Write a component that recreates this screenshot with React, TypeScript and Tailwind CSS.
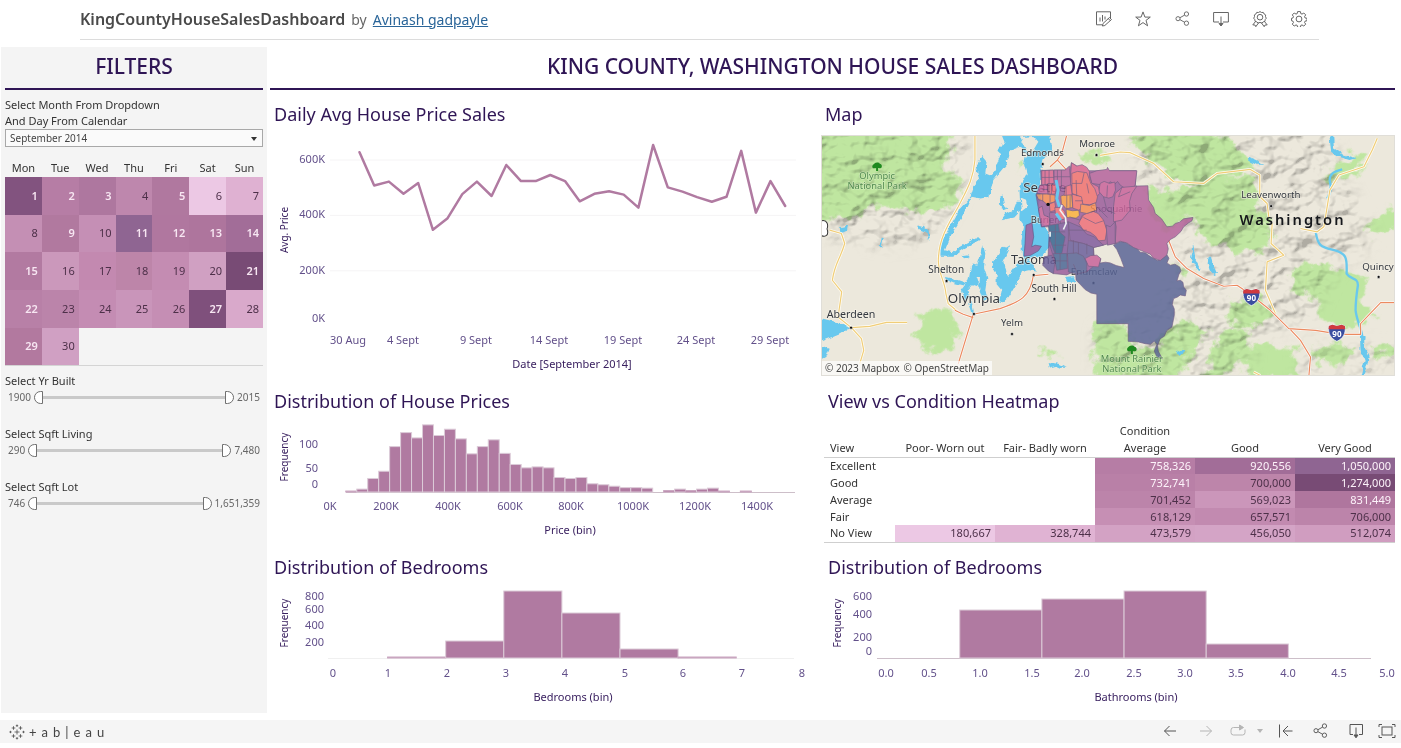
import type { ReactNode } from 'react';

const SANS = "font-['Noto_Sans','Open_Sans',sans-serif]";

/* ---------- icons ---------- */

function Icon({ children, className = 'size-4' }: { children: ReactNode; className?: string }) {
  return (
    <svg viewBox="0 0 16 16" className={className} fill="none" stroke="currentColor" strokeWidth="1" aria-hidden="true">
      {children}
    </svg>
  );
}

const EditIcon = () => (
  <Icon>
    <path d="M14.5 7V.8H.5v13h5.700" />
    <path d="M4 6.5v4M6.500 4v6.500M9 5.500v3" />
    <path d="M7 12.500l6.500-6 2 2-6.700 6L6.400 15z" />
    <path d="M12.300 7.600l2 2.100" />
  </Icon>
);
const StarIcon = () => (
  <Icon>
    <path d="M8 .9l1.900 5.200h5.400l-4.300 3.300 1.600 5.400L8 11.600l-4.600 3.200L5 9.400.7 6.100h5.400z" />
  </Icon>
);
const ShareIcon = () => (
  <Icon className="size-[15px]">
    <circle cx="3.2" cy="8.2" r="2.2" />
    <circle cx="12.2" cy="3.2" r="2.3" />
    <circle cx="12.2" cy="13" r="2.3" />
    <path d="M5.2 7.2l5-2.8M5.2 9.2l5 2.8" />
  </Icon>
);
const DownloadIcon = () => (
  <Icon>
    <path d="M6 11H.6V1.5h14.8V11H10" />
    <path d="M8 5.5v9" />
    <path d="M6 12.4h4L8 15z" fill="currentColor" />
  </Icon>
);
const RibbonIcon = () => (
  <Icon>
    <circle cx="8" cy="6.2" r="2.8" />
    <path d="M8 .6l1.5.9 1.8-.1.8 1.6 1.5.9-.1 1.8.8 1.5-1.1 1.4-.3 1.8-1.7.5-1.3 1.2L8 11.4l-1.9.7-1.3-1.2-1.7-.5-.3-1.8-1.1-1.4.8-1.5-.1-1.8 1.5-.9.8-1.6 1.8.1z" />
    <path d="M3.6 10.4L.8 13.9l2.2.1.8 1.7 2.9-4M12.4 10.4l2.8 3.5-2.2.1-.8 1.7-2.9-4" />
  </Icon>
);
const GearIcon = () => (
  <Icon>
    <circle cx="8" cy="8" r="2.9" />
    <path d="M6.6.6h2.8l.4 2 1.2.5 1.8-1.1 1.900 1.900-1.200 1.800.5 1.200 2 .4v2.400l-2 .5-.5 1.200 1.200 1.700-1.900 2-1.800-1.200-1.200.5-.4 2H6.600l-.4-2-1.200-.5-1.800 1.200-1.900-2 1.200-1.700-.5-1.200-1.500-.5V7.300l1.500-.4.5-1.200L1.300 3.900 3.200 2 5 3.100l1.200-.5z" />
  </Icon>
);

const BackIcon = () => (
  <Icon>
    <path d="M14 8H2.500M7.500 3L2.500 8l5 5" />
  </Icon>
);
const ForwardIcon = () => (
  <Icon>
    <path d="M2 8h11.500M8.500 3l5 5-5 5" />
  </Icon>
);
const ReplayIcon = () => (
  <Icon>
    <path d="M10 4.500H3.500a2.500 2.500 0 00-2.500 2.500v2.500A2.500 2.500 0 003.500 12h9A2.500 2.500 0 0015 9.500V6.500" />
    <path d="M9.500 2l4 2.500-4 2.500z" fill="currentColor" />
  </Icon>
);
const ResetIcon = () => (
  <Icon>
    <path d="M1.500 1.500v13M14.500 8H5M10 3L5 8l5 5" />
  </Icon>
);
const FooterDownloadIcon = () => (
  <Icon>
    <path d="M5 11.500H2V1.500h12.500v10H11" />
    <path d="M8 4.500v8" />
    <path d="M6 12h4l-2 2.800z" fill="currentColor" />
  </Icon>
);
const FullscreenIcon = () => (
  <Icon className="h-4 w-[18px]">
    <rect x="3" y="4" width="10" height="8" />
    <path d="M0 4V1.500h3M13 1.500h3V4M16 12v2.500h-3M3 14.500H0V12" />
  </Icon>
);
const TableauMark = () => (
  <Icon className="size-4">
    <path
      strokeOpacity="0.75"
      d="M8 5.500v5M5.500 8h5M4.500 2.200v3.600M2.700 4h3.600M11.500 2.200v3.600M9.700 4h3.600M4.500 10.200v3.600M2.700 12h3.600M11.500 10.200v3.600M9.700 12h3.600M8 .5v2.400M6.800 1.700h2.400M8 13.100v2.400M6.800 14.300h2.400M1.500 6.800v2.400M.3 8h2.400M14.500 6.800v2.400M13.300 8h2.400"
    />
  </Icon>
);

/* ---------- filters ---------- */

type Day = [day: number, fill: string, strong?: boolean];

const WEEKDAYS = ['Mon', 'Tue', 'Wed', 'Thu', 'Fri', 'Sat', 'Sun'];
const WEEKS: Day[][] = [
  [[1, 'bg-[#82537f]', true], [2, 'bg-[#b67da5]', true], [3, 'bg-[#ae779f]', true], [4, 'bg-[#be87ad]'], [5, 'bg-[#b0789f]', true], [6, 'bg-[#ecc8e4]'], [7, 'bg-[#dfb1d2]']],
  [[8, 'bg-[#c48fb4]'], [9, 'bg-[#b1799f]', true], [10, 'bg-[#c58fb5]'], [11, 'bg-[#8f6592]', true], [12, 'bg-[#b0779f]', true], [13, 'bg-[#ae759d]', true], [14, 'bg-[#a26d98]', true]],
  [[15, 'bg-[#b27aa1]', true], [16, 'bg-[#cb98bb]'], [17, 'bg-[#c389b0]'], [18, 'bg-[#bd85a9]'], [19, 'bg-[#c48cb2]'], [20, 'bg-[#d0a0c2]'], [21, 'bg-[#784b75]', true]],
  [[22, 'bg-[#b880a7]', true], [23, 'bg-[#bb84aa]'], [24, 'bg-[#c48cb3]'], [25, 'bg-[#c995ba]'], [26, 'bg-[#c58eb4]'], [27, 'bg-[#7f507c]', true], [28, 'bg-[#d9a9cb]']],
  [[29, 'bg-[#b2799f]', true], [30, 'bg-[#d0a0c3]']],
];

function Calendar() {
  return (
    <table className="mt-3 h-[207px] w-full table-fixed border-collapse border-b border-[#d4d4d4] text-[11px] text-[#333]">
      <thead>
        <tr className="h-[18px]">
          {WEEKDAYS.map((d) => (
            <th key={d} scope="col" className="p-0 text-center leading-4 font-normal">{d}</th>
          ))}
        </tr>
      </thead>
      <tbody>
        {WEEKS.map((week, i) => (
          <tr key={i} className="h-[37px]">
            {week.map(([day, fill, strong]) => (
              <td key={day} className={`${fill} p-0 pr-1 text-right ${strong ? 'font-semibold text-[#f7e6f2]' : 'text-[#4d3049]'}`}>
                {day}
              </td>
            ))}
          </tr>
        ))}
      </tbody>
    </table>
  );
}

const THUMB =
  'pointer-events-none absolute inset-0 m-0 h-[13px] w-full appearance-none bg-transparent [&::-webkit-slider-thumb]:pointer-events-auto [&::-webkit-slider-thumb]:h-[13px] [&::-webkit-slider-thumb]:w-[9px] [&::-webkit-slider-thumb]:appearance-none [&::-webkit-slider-thumb]:border [&::-webkit-slider-thumb]:border-[#707070] [&::-webkit-slider-thumb]:bg-white';

function RangeFilter({ label, min, max }: { label: string; min: number; max: number }) {
  const show = (n: number) => (n > 2100 ? n.toLocaleString('en-US') : String(n));
  return (
    <fieldset className="h-[53px]">
      <legend className="text-[11px] leading-4 text-[#333]">{label}</legend>
      <div className="flex items-center gap-[3px] px-[3px] text-[10px] leading-4 text-[#666]">
        <span>{show(min)}</span>
        <div className="relative h-[13px] flex-1">
          <div className="h-[3px] translate-y-[5px] bg-[#c9c9c9]" />
          <input type="range" aria-label={`${label} minimum`} min={min} max={max} defaultValue={min} className={`${THUMB} [&::-webkit-slider-thumb]:rounded-l-full`} />
          <input type="range" aria-label={`${label} maximum`} min={min} max={max} defaultValue={max} className={`${THUMB} [&::-webkit-slider-thumb]:rounded-r-full`} />
        </div>
        <span>{show(max)}</span>
      </div>
    </fieldset>
  );
}

function Filters() {
  return (
    <aside className="w-[266px] shrink-0 bg-[#f4f4f4] px-1">
      <h2 className="border-b-2 border-[#2f1555] pt-[3px] pb-[5px] text-center text-[21px] leading-[33px] font-medium text-[#2f1555]">FILTERS</h2>
      <label htmlFor="month" className="mt-[7px] block text-[11px] leading-4 text-[#333]">
        Select Month From Dropdown
        <br />
        And Day From Calendar
      </label>
      <div className="relative">
        <select id="month" className="block h-[18px] w-full appearance-none border border-[#a8a8a8] bg-[#fafafa] px-1 text-[10px] text-[#444]">
          <option>September 2014</option>
        </select>
        <svg viewBox="0 0 6 4" className="pointer-events-none absolute top-2 right-1.5 h-1 w-1.5" aria-hidden="true">
          <path d="M0 0h6L3 4z" fill="#333" />
        </svg>
      </div>
      <Calendar />
      <div className="mt-[7px]">
        <RangeFilter label="Select Yr Built" min={1900} max={2015} />
        <RangeFilter label="Select Sqft Living" min={290} max={7480} />
        <RangeFilter label="Select Sqft Lot" min={746} max={1651359} />
      </div>
    </aside>
  );
}

/* ---------- charts ---------- */

const INK = '#3a2160';
const TICK = '#62508a';
const BAR = '#b07aa1';

function Tick({ x, y, end, children }: { x: number; y: number; end?: boolean; children: ReactNode }) {
  return (
    <text x={x} y={y + 4} fontSize="11" fill={TICK} textAnchor={end ? 'end' : 'middle'}>
      {children}
    </text>
  );
}

function AxisTitles({ left, leftY, bottom, bottomX, bottomY, x = 15 }: { left: string; leftY: number; bottom: string; bottomX: number; bottomY: number; x?: number }) {
  return (
    <g fontSize="11" fill={INK} textAnchor="middle">
      <text transform={`translate(${x + 3} ${leftY}) rotate(-90)`} fontSize="10">{left}</text>
      <text x={bottomX} y={bottomY + 4}>{bottom}</text>
    </g>
  );
}

const PRICES = [628, 508, 522, 478, 517, 348, 390, 477, 522, 470, 582, 524, 524, 546, 524, 451, 478, 487, 475, 428, 654, 501, 486, 466, 449, 467, 633, 410, 524, 434];

function DailyPriceChart() {
  const y = (k: number) => 29 + (600 - k) * 0.277;
  const points = PRICES.map((p, i) => `${(89.5 + i * 14.68).toFixed(1)},${y(p).toFixed(1)}`).join(' ');
  const dates: [number, string][] = [[78, '30 Aug'], [133, '4 Sept'], [206, '9 Sept'], [279, '14 Sept'], [353, '19 Sept'], [426, '24 Sept'], [500, '29 Sept']];
  return (
    <svg viewBox="0 0 551 254" className="block w-full" role="img" aria-label="Average house price per day">
      {[600, 400, 200].map((k) => (
        <g key={k}>
          <line x1="60" x2="526" y1={y(k)} y2={y(k)} stroke="#f5f4f5" />
          <Tick x={55} y={y(k) - 1} end>{k}K</Tick>
        </g>
      ))}
      <Tick x={55} y={187} end>0K</Tick>
      <polyline points={points} fill="none" stroke={BAR} strokeWidth="2.500" strokeLinejoin="round" strokeLinecap="round" />
      {dates.map(([x, d]) => <Tick key={d} x={x} y={209}>{d}</Tick>)}
      <AxisTitles left="Avg. Price" leftY={99} bottom="Date [September 2014]" bottomX={302} bottomY={233} />
    </svg>
  );
}

interface HistogramProps {
  width: number;
  height: number;
  label: string;
  start: number;
  binWidth: number;
  heights: number[];
  axis: [number, number];
  axisColor: string;
  yTicks: [number, string][];
  yTickX: number;
  xTicks: [number, string][];
  xTickY?: number;
  bottom: string;
  bottomX: number;
  leftX?: number;
}

function Histogram(p: HistogramProps) {
  const base = 74;
  const tickY = p.xTickY ?? 89;
  return (
    <svg viewBox={`0 0 ${p.width} ${p.height}`} className="block w-full" role="img" aria-label={p.label}>
      <line x1={p.axis[0]} x2={p.axis[1]} y1={base + 0.5} y2={base + 0.5} stroke={p.axisColor} />
      {p.heights.map((h, i) =>
        h > 0 ? (
          <rect key={i} x={p.start + i * p.binWidth} y={base - h} width={p.binWidth} height={h} fill={BAR} stroke={h < 2 ? '#c9a6c0' : '#dccbd8'} />
        ) : null,
      )}
      {p.yTicks.map(([y, t]) => <Tick key={t} x={p.yTickX} y={y} end>{t}</Tick>)}
      {p.xTicks.map(([x, t]) => <Tick key={t} x={x} y={tickY}>{t}</Tick>)}
      <AxisTitles left="Frequency" leftY={39} bottom={p.bottom} bottomX={p.bottomX} bottomY={tickY + 24} x={p.leftX} />
    </svg>
  );
}

const PRICE_COUNTS = [2, 6, 28, 43, 94, 123, 112, 139, 117, 130, 110, 79, 94, 108, 80, 57, 50, 52, 50, 30, 28, 30, 17, 15, 12, 9, 9, 8, 0, 3, 6, 3, 6, 8, 2, 0, 2];

/* ---------- heatmap ---------- */

const CONDITIONS = ['Poor- Worn out', 'Fair- Badly worn', 'Average', 'Good', 'Very Good'];
type Cell = [string, string] | null;
const DARK = 'text-[#4d3049]';
const LIGHT = 'text-[#fdf3fa]';
const HEAT: [string, Cell[]][] = [
  ['Excellent', [null, null, ['758,326', `bg-[#b67da5] ${LIGHT}`], ['920,556', `bg-[#a26d98] ${LIGHT}`], ['1,050,000', `bg-[#8f6592] ${LIGHT}`]]],
  ['Good', [null, null, ['732,741', `bg-[#b980a7] ${LIGHT}`], ['700,000', `bg-[#bd85aa] ${DARK}`], ['1,274,000', `bg-[#784b75] ${LIGHT}`]]],
  ['Average', [null, null, ['701,452', `bg-[#bc84aa] ${DARK}`], ['569,023', `bg-[#cb96ba] ${DARK}`], ['831,449', `bg-[#af769e] ${LIGHT}`]]],
  ['Fair', [null, null, ['618,129', `bg-[#c68fb4] ${DARK}`], ['657,571', `bg-[#c28ab0] ${DARK}`], ['706,000', `bg-[#bc84aa] ${DARK}`]]],
  ['No View', [['180,667', `bg-[#ecc8e4] ${DARK}`], ['328,744', `bg-[#e0b3d3] ${DARK}`], ['473,579', `bg-[#d3a2c4] ${DARK}`], ['456,050', `bg-[#d4a4c6] ${DARK}`], ['512,074', `bg-[#d09dc0] ${DARK}`]]],
];

function Heatmap() {
  return (
    <div className="pt-[3px] pl-[3px]">
      <table className="w-full table-fixed border-collapse border-b border-[#cfcfcf] text-[11px] leading-4 text-[#333]">
        <colgroup>
          <col className="w-[71px]" />
          <col span={5} />
        </colgroup>
        <thead>
          <tr className="h-[19px]">
            <td colSpan={3} />
            <th scope="colgroup" className="p-0 font-normal">Condition</th>
            <td colSpan={2} />
          </tr>
          <tr className="h-[17px] border-b border-[#cfcfcf]">
            <th scope="col" className="p-0 pl-1.5 text-left font-normal">View</th>
            {CONDITIONS.map((c) => (
              <th key={c} scope="col" className="p-0 font-normal whitespace-nowrap">{c}</th>
            ))}
          </tr>
        </thead>
        <tbody>
          {HEAT.map(([view, cells]) => (
            <tr key={view} className="h-[17px]">
              <th scope="row" className="p-0 pl-1.5 text-left font-normal">{view}</th>
              {cells.map((c, i) => (
                <td key={i} className={`p-0 pr-1 text-right ${c ? c[1] : ''}`}>{c ? c[0] : ''}</td>
              ))}
            </tr>
          ))}
        </tbody>
      </table>
    </div>
  );
}

/* ---------- map ---------- */

const FOREST = [
  'M-40 -20L385 -10 395 70 370 110 425 150 415 220 340 245 260 240 180 225 110 260 60 250 -20 300z',
  'M300 560L345 535 395 548 415 590 400 650 350 672 310 655 295 610z',
  'M920 10L1010 -10 1140 -10 1230 20 1270 80 1310 120 1200 145 1120 155 1060 155 1000 105z',
  'M980 165L1080 180 1170 145 1290 140 1320 190 1300 270 1240 335 1160 320 1120 255 1030 310 985 240z',
  'M1110 255L1200 235 1340 260 1355 355 1260 365 1150 335z',
  'M1405 430L1480 395 1560 415 1645 445 1620 500 1670 560 1560 600 1500 565 1490 500 1420 485z',
  'M820 580L925 575 925 635 1000 650 1050 600 1110 570 1165 600 1125 660 1070 750 830 750z',
  'M1235 510L1310 495 1355 540 1320 595 1220 575z',
  'M1215 595L1260 585 1295 620 1265 690 1210 745 1150 745 1175 660z',
  'M1255 655L1350 645 1420 655 1440 745 1280 745z',
  'M1480 650L1560 635 1605 670 1560 705 1480 695z',
  'M1650 650L1734 645 1734 670 1650 680z',
  'M1510 135L1600 70 1645 75 1605 135 1540 155z',
  'M1630 295L1700 235 1734 245 1734 305 1680 320z',
  'M1070 395L1110 420 1090 440z',
  'M665 660L700 655 720 668 705 682 670 678z',
  'M780 70L850 60 860 110 810 110z',
  'M595 95L612 90 610 120 598 125z',
];

const WATER = [
  'M545 15L690 15 696 55 670 92 662 125 664 190 655 230 660 260 676 290 690 320 690 350 668 378 640 378 625 390 606 378 604 330 612 290 598 270 600 215 598 170 620 130 612 100 618 75 600 50 570 62 556 82 532 62 555 40z',
  'M548 40L572 60 562 98 545 120 520 150 508 200 482 205 455 200 425 262 395 312 375 360 400 366 420 350 476 318 484 328 440 352 400 380 362 380 360 345 384 300 420 236 452 200 462 170 478 150 468 108 488 78 500 92 496 130 515 138 530 105 540 78z',
  'M540 200L548 196 552 225 562 235 550 240 540 222z',
  'M560 250L580 240 590 215 600 215 600 240 580 262 545 270z',
  'M488 340L496 370 492 410 502 440 496 480 505 505 490 512 478 480 480 440 470 410 480 380z',
  'M520 390L535 372 548 350 560 352 570 345 566 362 550 395 558 415 562 440 590 402 612 385 640 402 648 424 628 420 606 425 590 460 566 500 550 515 535 518 545 480 530 462 530 430 518 410z',
  'M455 400L480 405 500 440 470 440 480 470 455 462 440 480 450 500 436 512 425 478 446 450z',
  'M378 440L400 445 430 455 440 460 430 466 400 458 384 455z',
  'M425 375L445 372 452 380 435 388z',
  'M445 520L455 515 462 548 455 550z',
  'M-10 560L50 575 95 590 60 612 40 620 -10 640z',
  'M-10 640L30 655 20 680 -10 695z',
  'M60 292L85 286 82 302 62 310z',
  'M180 350L186 322 192 325 186 352z',
  'M290 285L310 290 326 300 330 330 324 330 320 306 300 298z',
  'M685 695L715 700 740 712 720 712 712 708 690 714z',
  'M735 440L760 438 766 455 745 460z',
  'M1117 335L1120 350 1125 385 1140 415 1136 422 1122 405 1112 385 1118 365z',
  'M1165 380L1172 380 1176 400 1190 430 1182 434 1168 420 1162 400z',
  'M1285 80L1310 90 1328 104 1308 104 1288 94z',
  'M1526 15L1538 15 1540 55 1565 72 1608 85 1590 90 1560 82 1532 66z',
  'M1068 668L1090 655 1096 660 1080 678z',
];

const ISLANDS = [
  'M600 22L640 18 655 35 640 60 628 78 618 60z',
  'M602 205L618 212 622 232 606 245z',
  'M560 90L580 82 596 96 590 120 566 130z',
];

const COLUMBIA =
  'M1565 118C1540 125 1525 130 1528 155C1535 175 1528 190 1520 205M1486 308C1492 345 1500 350 1535 358C1580 368 1580 385 1578 430C1590 450 1612 440 1612 465C1605 510 1605 530 1605 540C1608 570 1625 600 1625 620';

const YELLOW_ROADS = [
  'M465 15L465 90C460 150 440 180 415 230C380 290 358 330 356 380C350 420 375 450 378 490L385 520 415 545',
  'M30 300L65 310 75 340C60 390 45 400 38 450L66 485 55 560 95 592 150 588 200 576 262 576',
  'M95 592L125 625 132 660 120 700',
  'M840 76L900 66 930 68 1000 100 1060 155 1150 160 1190 130 1290 118 1318 135 1318 200 1340 220 1345 260',
  'M1355 280L1352 340 1390 375 1340 395 1335 480 1365 550',
  'M1670 25L1655 60 1630 110 1555 135 1528 180 1510 290 1490 305 1440 295',
  'M1300 725L1320 735',
];
const ORANGE_ROADS = [
  'M740 15L725 70 712 90 690 110M712 90L738 118',
  'M685 432L640 436C630 500 600 515 540 535L460 552 415 700M460 562L430 552 405 540',
  'M1045 330L1065 380 1100 415 1150 445 1210 468 1250 465 1290 492 1350 540 1405 595 1485 600 1560 612 1620 612 1620 580 1680 517 1724 517',
  'M1410 598L1440 630 1470 680 1465 738',
];

/* [fill, outline] for each ZIP code area */
const ZIPS: [string, string][] = [
  ['#9a5c9b', 'M662 121L735 120 750 118 754 98 770 108 808 122 870 122 948 122 945 170 900 200 888 340 860 342 820 352 822 376 842 386 836 410 800 425 766 422 740 434 700 430 682 416 668 400 684 380 688 290 664 290 655 235 648 195 664 165z'],
  ['#5a6596', 'M766 420L800 425 830 400 856 396 870 398 888 406 912 412 902 385 890 358 880 345 900 334 915 336 930 345 946 350 960 366 975 368 992 380 1012 391 1030 382 1040 374 1046 384 1040 398 1050 405 1064 402 1078 410 1082 422 1076 432 1070 452 1080 450 1088 456 1090 470 1098 480 1095 497 1080 494 1072 500 1060 505 1056 522 1062 536 1062 555 1055 590 1040 600 1032 618 1020 625 1012 645 1014 662 1026 685 1010 680 1002 662 1010 642 1002 633 990 642 975 640 955 635 924 633 924 580 830 580 830 492 812 488 795 478 780 462 768 450z'],
  ['#b5629c', 'M948 168L983 167 985 210 1000 232 1005 250 1024 266 1040 290 1056 288 1065 280 1078 276 1090 266 1118 262 1115 272 1105 278 1090 290 1082 304 1065 320 1050 328 1040 340 1044 356 1040 374 1020 391 1000 384 990 372 965 362 940 352 920 338 900 333 885 340 888 290 880 250 900 200 930 185z'],
  ['#b5629c', 'M808 130L830 122 860 118 862 112 868 122 950 122 945 165 930 185 900 165 892 154 884 162 870 155 858 166 850 165 815 160z'],
  ['#c9629a', 'M885 190L905 172 950 168 935 190 928 214 930 240 905 270 880 275 880 230z'],
  ['#c9629a', 'M840 160L852 154 868 160 884 156 886 180 878 200 866 204 850 200 836 184z'],
  ['#d9658f', 'M754 98L770 108 786 104 800 112 808 124 808 140 815 160 835 170 838 190 830 200 812 190 780 200 765 180 750 160z'],
  ['#f0706f', 'M755 130L772 124 800 128 812 160 824 176 832 200 828 218 808 224 788 222 780 200 756 190z'],
  ['#ee6f78', 'M786 256L800 250 820 244 834 250 850 270 860 300 855 330 835 332 826 318 810 306 790 300 776 280z'],
  ['#9a5c9b', 'M858 285L870 290 885 275 885 340 862 345z'],
  ['#7f5a9c', 'M745 275L780 290 800 312 822 320 850 345 820 352 790 340 750 330z'],
  ['#6b5f9b', 'M740 330L790 340 820 352 820 385 800 400 760 400 740 370z'],
  ['#c9629a', 'M795 385L812 376 830 375 842 385 835 410 805 408z'],
  ['#5a6596', 'M742 370L770 368 790 378 800 400 800 424 770 432 745 425z'],
  ['#7f5a9c', 'M690 275L720 280 745 275 745 330 740 380 700 380 688 340z'],
  ['#35648f', 'M685 285L715 280 718 305 735 320 725 370 705 370 690 330z'],
  ['#4b6795', 'M700 370L740 370 742 415 710 420z'],
  ['#6b5f9b', 'M672 380L695 375 704 400 700 430 685 422 668 405z'],
  ['#a35d9b', 'M618 285L636 278 641 320 635 350 645 345 664 348 655 362 630 376 612 378 615 340z'],
  ['#d9658f', 'M665 122L700 120 702 160 665 165z'],
  ['#b5629c', 'M702 120L735 120 748 108 752 165 735 175 712 168 702 150z'],
  ['#c9629a', 'M660 165L684 165 684 192 650 190z'],
  ['#e8687f', 'M684 160L710 165 705 192 684 192z'],
  ['#f58b55', 'M648 192L680 192 705 195 705 215 680 222 668 212 655 208z'],
  ['#f0706f', 'M688 222L704 215 708 240 690 245z'],
  ['#c9629a', 'M655 235L666 228 672 255 688 262 688 285 665 290z'],
  ['#9a5c9b', 'M688 248L712 245 722 280 690 285z'],
  ['#f79a45', 'M722 198L740 192 755 194 758 232 738 236 724 220z'],
  ['#fbb13c', 'M738 238L758 242 776 240 778 256 768 264 740 262z'],
  ['#f0706f', 'M756 192L784 200 790 232 776 240 758 234z'],
  ['#f58b55', 'M782 222L808 226 826 218 830 240 800 250 780 246z'],
  ['#e8687f', 'M735 170L752 164 756 194 732 196z'],
  ['#ee6f78', 'M704 232L722 232 735 245 732 268 718 268 706 250z'],
];

/* Boundaries that subdivide the denser city areas */
const ZIP_LINES = [
  'M675 121V165M687 120V192M712 120V160M724 120V170M665 142H702M702 140H750',
  'M665 178H684M694 162V192M668 192V214M690 194V218M738 170V196M740 196V236M750 196V234',
  'M756 160H785L792 128M770 198L768 150M765 212H788M806 190L800 160',
  'M706 284V370M690 305H735M700 345H738M720 370V418M704 392H742M745 300H800M760 330V370M775 336V372M760 402L772 430',
  'M850 200L860 240 885 250M832 232L862 262M862 166L860 200M905 172L895 200 930 185',
  'M790 262L826 280 850 272M800 340V372M748 260L780 270 790 256',
];

function Shield({ x, y }: { x: number; y: number }) {
  return (
    <g transform={`translate(${x} ${y})`}>
      <path d="M-24 -20L-14 -24 0 -20 14 -24 24 -20C28 2 18 18 0 26C-18 18 -28 2 -24 -20z" fill="#3b4ea0" stroke="#fff" strokeWidth="2" />
      <path d="M-24 -20L-14 -24 0 -20 14 -24 24 -20 25 -10H-25z" fill="#d03a3f" />
      <text y="12" fontSize="24" fontWeight="700" fill="#fff" textAnchor="middle">90</text>
    </g>
  );
}

function Tree({ x, y }: { x: number; y: number }) {
  return (
    <g transform={`translate(${x} ${y})`} fill="#1f8a1f">
      <path d="M-14 2C-16 -6 -8 -8 -8 -10C-4 -14 6 -14 8 -9C14 -8 16 -2 13 3C8 6 4 4 3 4V13H-3V4C-6 5 -12 6 -14 2z" />
    </g>
  );
}

type Place = [name: string, x: number, y: number, size: number, dot?: [number, number]];
const UNDER: Place[] = [
  ['Seattle', 674, 185, 40, [684, 223]],
  ['Burien', 676, 279, 28],
  ['Tacoma', 642, 400, 38, [641, 434]],
  ['Snoqualmie', 888, 246, 28],
  ['Enumclaw', 822, 435, 29, [820, 458]],
];
const OVER: Place[] = [
  ['Edmonds', 667, 79, 29, [668, 102]],
  ['Monroe', 831, 52, 29, [829, 75]],
  ['Shelton', 379, 429, 30, [380, 452]],
  ['Olympia', 462, 518, 40, [462, 551]],
  ['South Hill', 702, 484, 30, [703, 506]],
  ['Aberdeen', 94, 564, 32, [94, 592]],
  ['Yelm', 576, 587, 29, [576, 611]],
  ['Leavenworth', 1351, 205, 29, [1352, 228]],
  ['Quincy', 1672, 418, 29, [1674, 440]],
];

function Places({ list }: { list: Place[] }) {
  return (
    <g fill="#34383f" textAnchor="middle">
      {list.map(([name, x, y, size, dot]) => (
        <g key={name}>
          <text x={x} y={y} fontSize={size} stroke="#f7f4ea" strokeWidth="4" strokeOpacity="0.7" paintOrder="stroke">{name}</text>
          {dot && <circle cx={dot[0]} cy={dot[1]} r="4.500" fill="#111" stroke="#fff" strokeWidth="1.500" />}
        </g>
      ))}
    </g>
  );
}

function RegionMap() {
  return (
    <div className="relative border border-[#e0ded8]">
      <svg viewBox="7 18 1713 717" className="block w-full" role="img" aria-label="Map of average prices by ZIP code around Seattle">
        <defs>
          <filter id="soft" x="-10%" y="-10%" width="120%" height="120%">
            <feGaussianBlur stdDeviation="5" result="b" />
            <feTurbulence type="fractalNoise" baseFrequency="0.03" numOctaves="3" seed="4" result="n" />
            <feDisplacementMap in="b" in2="n" scale="60" xChannelSelector="R" yChannelSelector="G" />
          </filter>
          <filter id="coast" x="-5%" y="-5%" width="110%" height="110%">
            <feTurbulence type="fractalNoise" baseFrequency="0.06" numOctaves="2" seed="9" result="n" />
            <feDisplacementMap in="SourceGraphic" in2="n" scale="14" xChannelSelector="R" yChannelSelector="G" />
          </filter>
          <filter id="relief" x="0" y="0" width="100%" height="100%">
            <feTurbulence type="fractalNoise" baseFrequency="0.014 0.018" numOctaves="3" seed="12" result="n" />
            <feDiffuseLighting in="n" surfaceScale="55" diffuseConstant="1.250" lightingColor="#fff" result="l">
              <feDistantLight azimuth="225" elevation="58" />
            </feDiffuseLighting>
            <feColorMatrix in="l" type="saturate" values="0" />
          </filter>
          <filter id="fade">
            <feGaussianBlur stdDeviation="22" />
          </filter>
          <mask id="hills">
            <g fill="#fff" filter="url(#fade)">
              <path d="M-40 -30H440L420 200 340 330 200 350 60 320 -40 300z" />
              <path d="M930 -30H1520L1560 120 1660 330 1540 420 1480 560 1400 590 1300 620 1280 780H830V590L1000 560 1080 400 1100 260 960 140z" />
              <path d="M1430 640H1740V780H1430z" opacity=".5" />
            </g>
          </mask>
        </defs>
        <rect x="0" y="0" width="1730" height="760" fill="#ece8dc" />
        <g fill="#bfe6a0" filter="url(#soft)">
          {FOREST.map((d) => <path key={d} d={d} />)}
        </g>
        <g mask="url(#hills)" className="mix-blend-multiply">
          <rect x="0" y="0" width="1730" height="760" filter="url(#relief)" opacity="0.26" />
        </g>
        <g fill="#68c8ee" filter="url(#coast)">
          {WATER.map((d) => <path key={d} d={d} />)}
          <path d="M1618 615L1632 618 1630 650 1644 680 1640 705 1626 738 1620 738 1632 690 1620 660z" />
          {ISLANDS.map((d) => <path key={d} d={d} fill="#ece8dc" />)}
        </g>
        <path d={COLUMBIA} fill="none" stroke="#68c8ee" strokeWidth="7" />
        <g fill="none" strokeLinejoin="round">
          {YELLOW_ROADS.map((d) => <path key={d} d={d} stroke="#fffdf5" strokeWidth="8" />)}
          {YELLOW_ROADS.map((d) => <path key={d} d={d} stroke="#f0cd78" strokeWidth="3.500" />)}
          {ORANGE_ROADS.map((d) => <path key={d} d={d} stroke="#fff" strokeWidth="7" />)}
          {ORANGE_ROADS.map((d) => <path key={d} d={d} stroke="#ec8a60" strokeWidth="3.500" />)}
        </g>
        <Places list={UNDER} />
        <g stroke="#5d4776" strokeWidth="2" strokeLinejoin="round" opacity="0.84">
          {ZIPS.map(([fill, d]) => <path key={d} d={d} fill={fill} />)}
          {ZIP_LINES.map((d) => <path key={d} d={d} fill="none" />)}
        </g>
        <circle cx="684" cy="223" r="5" fill="#111" />
        <path d="M726 225L720 240 736 262 738 280 730 298M690 305V320" fill="none" stroke="#eef3f3" strokeWidth="5" />
        <path d="M708 150L714 180 710 205 718 230M708 250L722 270" fill="none" stroke="#68c8ee" strokeWidth="9" />
        <Places list={OVER} />
        <Shield x={1293} y={500} />
        <Shield x={1549} y={607} />
        <path d="M5 272C24 268 26 286 22 296C30 320 12 320 5 316" fill="#fff" stroke="#333" strokeWidth="3" />
        <text x="1416" y="285" fontSize="44" fontWeight="600" fill="#16181c" textAnchor="middle" letterSpacing="6">Washington</text>
        <Tree x={172} y={110} />
        <Tree x={935} y={658} />
        <g fontSize="28" fill="#4f8a4c" textAnchor="middle" stroke="#e4f0d4" strokeWidth="3" strokeOpacity="0.6" paintOrder="stroke">
          <text x="172" y="146">Olympic</text>
          <text x="172" y="178">National Park</text>
          <text x="935" y="694">Mount Rainier</text>
          <text x="935" y="726">National Park</text>
        </g>
      </svg>
      <p className="absolute bottom-0 left-0 flex gap-1 bg-white/70 px-[3px] text-[10px] leading-[14px] text-[#444]">
        <a href="#mapbox">© 2023 Mapbox</a>
        <a href="#osm">© OpenStreetMap</a>
      </p>
    </div>
  );
}

/* ---------- page ---------- */

function Panel({ title, indent = 'pl-1', children }: { title: string; indent?: string; children: ReactNode }) {
  return (
    <section>
      <h3 className={`${indent} mb-px text-[18px] leading-8 text-[#2f1555]`}>{title}</h3>
      {children}
    </section>
  );
}

const HEADER_ACTIONS: [string, ReactNode][] = [
  ['Edit', <EditIcon />],
  ['Favourite', <StarIcon />],
  ['Share', <ShareIcon />],
  ['Download', <DownloadIcon />],
  ['Nominate', <RibbonIcon />],
  ['Settings', <GearIcon />],
];

export default function App() {
  return (
    <div className={`${SANS} bg-white`}>
      <header className="mr-[82px] ml-20 flex h-10 items-center justify-between border-b border-[#dcdcdc] pr-1">
        <p className="flex items-baseline gap-1.5 pb-0.5 text-[14px] text-[#666]">
          <strong className="text-[16px] font-semibold text-[#4a4a4a]">KingCountyHouseSalesDashboard</strong>
          by
          <a href="#author" className="text-[#2a6599] underline">Avinash gadpayle</a>
        </p>
        <div className="flex gap-[7px] pb-0.5 text-[#666]">
          {HEADER_ACTIONS.map(([label, icon]) => (
            <button key={label} type="button" aria-label={label} className="flex h-8 w-8 items-center justify-center">{icon}</button>
          ))}
        </div>
      </header>

      <div className="mt-[7px] flex items-stretch gap-[3px] pr-1.5 pl-px">
        <Filters />
        <main className="min-w-0 flex-1">
          <h1 className="border-b-2 border-[#2f1555] pt-[3px] pb-[5px] text-center text-[21px] leading-[33px] font-medium text-[#2f1555]">
            KING COUNTY, WASHINGTON HOUSE SALES DASHBOARD
          </h1>
          <div className="grid grid-cols-[551fr_574fr] pt-2">
            <Panel title="Daily Avg House Price Sales">
              <DailyPriceChart />
            </Panel>
            <Panel title="Map">
              <div className="pt-1">
                <RegionMap />
              </div>
            </Panel>
            <Panel title="Distribution of House Prices">
              <Histogram
                width={551} height={133} label="Number of sales per price band" start={75.8} binWidth={10.96}
                heights={PRICE_COUNTS.map((c) => c * 0.483)} axis={[76, 525]} axisColor="#cdbfc9"
                yTicks={[[26, '100'], [50, '50'], [66, '0']]} yTickX={48}
                xTicks={[[60, '0K'], [116, '200K'], [178, '400K'], [240, '600K'], [301, '800K'], [363, '1000K'], [425, '1200K'], [487, '1400K']]}
                xTickY={88} bottom="Price (bin)" bottomX={300}
              />
            </Panel>
            <Panel title="View vs Condition Heatmap" indent="pl-[7px]">
              <Heatmap />
            </Panel>
            <Panel title="Distribution of Bedrooms">
              <Histogram
                width={551} height={129} label="Number of houses per bedroom count" start={117.600} binWidth={58.100}
                heights={[1, 17, 67, 45, 9, 1]} axis={[58, 524]} axisColor="#f0f0f0"
                yTicks={[[12, '800'], [25, '600'], [41, '400'], [58, '200']]} yTickX={54}
                xTicks={[[63, '0'], [118, '1'], [177, '2'], [236, '3'], [295, '4'], [355, '5'], [413, '6'], [472, '7'], [532, '8']]}
                bottom="Bedrooms (bin)" bottomX={303}
              />
            </Panel>
            <Panel title="Distribution of Bedrooms" indent="pl-[7px]">
              <Histogram
                width={574} height={129} label="Number of houses per bathroom count" start={56.600} binWidth={82.150}
                heights={[0, 48, 59, 67, 14, 0]} axis={[56, 550]} axisColor="#cdbfc9"
                yTicks={[[12, '600'], [30, '400'], [53, '200'], [67, '0']]} yTickX={51}
                xTicks={[[65, '0.0'], [108, '0.5'], [159, '1.0'], [211, '1.5'], [261, '2.0'], [313, '2.5'], [364, '3.0'], [415, '3.5'], [467, '4.0'], [518, '4.5'], [566, '5.0']]}
                bottom="Bathrooms (bin)" bottomX={315} leftX={17}
              />
            </Panel>
          </div>
        </main>
      </div>

      <footer className="mt-[7px] flex h-[23px] items-center justify-between overflow-hidden bg-[#f5f5f5] pl-[9px] text-[#555]">
        <a href="#tableau" aria-label="tableau" className="flex items-center gap-1 font-['Lato',sans-serif] text-[13px] leading-4 text-[#444]">
          <TableauMark />
          <span className="flex gap-[5px]">
            {['+', 'a', 'b', '|', 'e', 'a', 'u'].map((c, i) => <span key={i}>{c}</span>)}
          </span>
        </a>
        <div className="flex items-center pb-0.5">
          <button type="button" aria-label="Undo" className="flex w-9 justify-center"><BackIcon /></button>
          <button type="button" aria-label="Redo" className="flex w-9 justify-center text-[#b5b5b5]"><ForwardIcon /></button>
          <button type="button" aria-label="Replay" className="flex w-7 justify-center text-[#b5b5b5]"><ReplayIcon /></button>
          <button type="button" aria-label="Replay speed" className="flex w-4 justify-center text-[#b5b5b5]">
            <svg viewBox="0 0 6 4" className="h-1 w-1.5" fill="currentColor" aria-hidden="true"><path d="M0 0h6L3 4z" /></svg>
          </button>
          <button type="button" aria-label="Reset" className="flex w-[35px] justify-center"><ResetIcon /></button>
          <button type="button" aria-label="Share" className="flex w-[35px] justify-center"><ShareIcon /></button>
          <button type="button" aria-label="Download" className="flex w-[35px] justify-center"><FooterDownloadIcon /></button>
          <button type="button" aria-label="Full screen" className="flex w-7 justify-center"><FullscreenIcon /></button>
        </div>
      </footer>
    </div>
  );
}
